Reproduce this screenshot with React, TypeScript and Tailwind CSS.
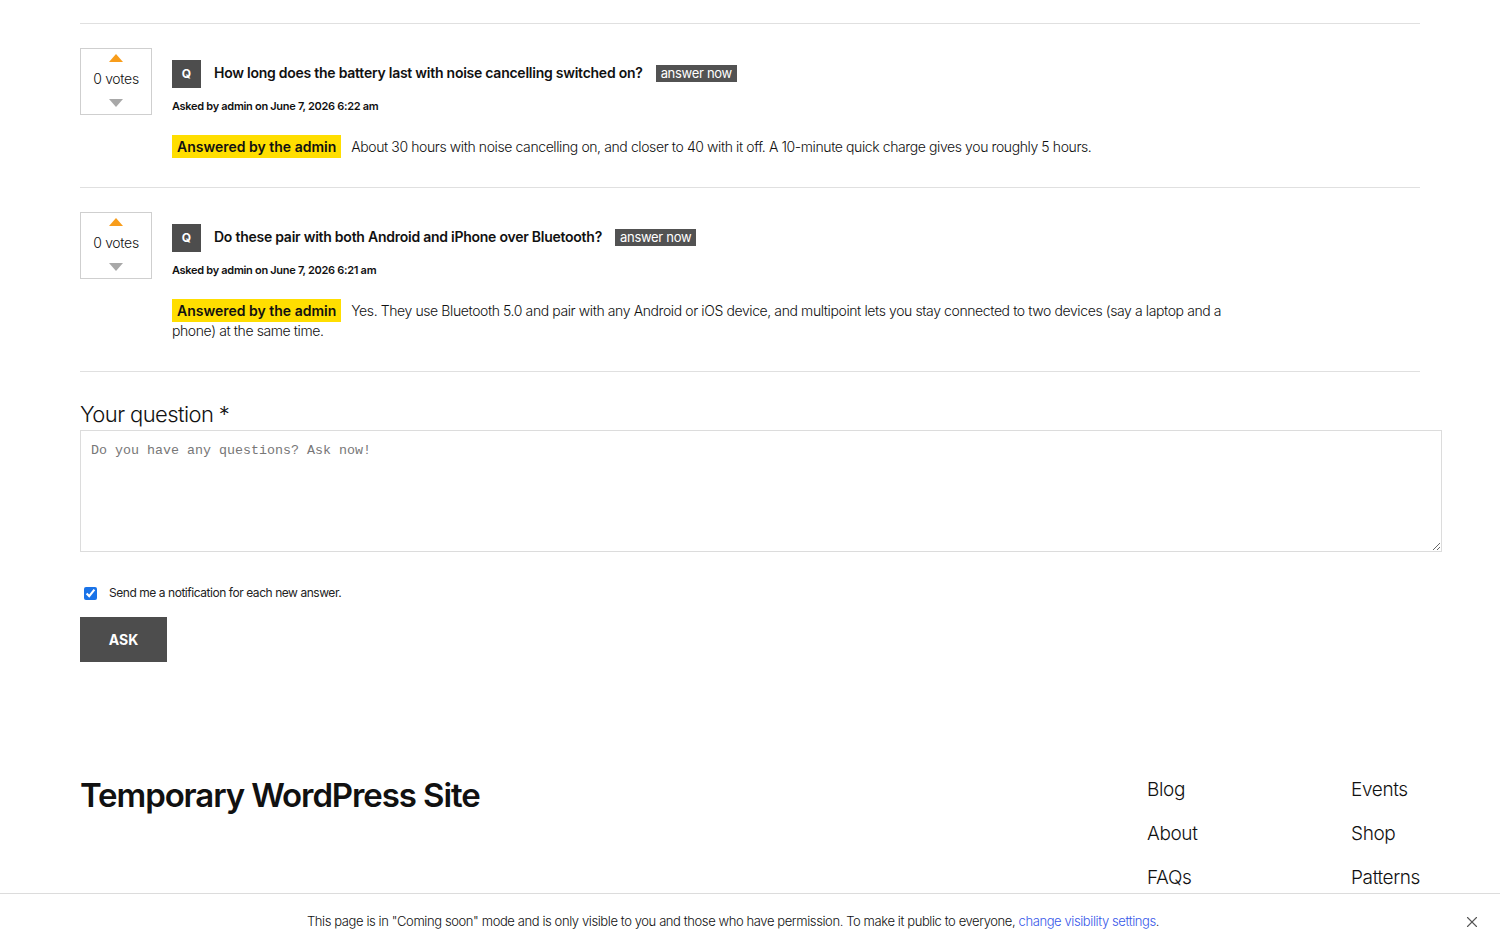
import { X } from 'lucide-react'

type Item = {
  question: string
  asked: string
  answer: string
}

const ITEMS: Item[] = [
  {
    question: 'How long does the battery last with noise cancelling switched on?',
    asked: 'Asked by admin on June 7, 2026 6:22 am',
    answer:
      'About 30 hours with noise cancelling on, and closer to 40 with it off. A 10-minute quick charge gives you roughly 5 hours.',
  },
  {
    question: 'Do these pair with both Android and iPhone over Bluetooth?',
    asked: 'Asked by admin on June 7, 2026 6:21 am',
    answer:
      'Yes. They use Bluetooth 5.0 and pair with any Android or iOS device, and multipoint lets you stay connected to two devices (say a laptop and a phone) at the same time.',
  },
]

const NAV = [
  ['Blog', 'Events'],
  ['About', 'Shop'],
  ['FAQs', 'Patterns'],
]

export default function App() {
  return (
    <div className="min-h-screen bg-white font-['Inter',sans-serif] text-[#111]">
      <div className="px-[80px] pt-[23px]">
        <div className="w-[1340px] border-t border-[#e0e0e0]">
          {ITEMS.map((item) => (
            <QuestionRow key={item.question} item={item} />
          ))}
        </div>

        <form className="mt-[28px]">
          <label className="block text-[22px] leading-[28px] font-light tracking-[-0.6px]">
            Your question *
          </label>
          <textarea
            className="mt-[2px] block h-[122px] w-[1362px] resize-y border border-[#dcdcdc] px-[10px] py-[10px] font-['Liberation_Mono',monospace] text-[13.33px] placeholder:text-[#777] focus:outline-none"
            placeholder="Do you have any questions? Ask now!"
          />
          <label className="mt-[33px] flex items-center gap-[12px] pl-[4px] text-[12px] leading-[16px] tracking-[-0.45px] text-[#222]">
            <input type="checkbox" defaultChecked className="h-[13px] w-[13px] accent-[#1a73e8]" />
            Send me a notification for each new answer.
          </label>
          <button
            type="button"
            className="mt-[16px] h-[45px] w-[87px] bg-[#4d4d4d] text-[14px] font-bold text-white"
          >
            ASK
          </button>
        </form>

        <footer className="mt-[115px] flex justify-between">
          <h2 className="-mt-[1px] text-[33px] leading-[38px] font-semibold tracking-[-1.1px] text-[#111]">
            Temporary WordPress Site
          </h2>
          <nav className="grid grid-cols-[204px_auto] gap-y-[18px] text-[19px] leading-[26px] font-light tracking-[-0.4px]">
            {NAV.flat().map((n) => (
              <a key={n} className="text-[#111]">
                {n}
              </a>
            ))}
          </nav>
        </footer>
      </div>

      <div className="fixed inset-x-0 bottom-0 flex h-[57px] items-center justify-center border-t border-[#dcdcdc] bg-white pr-[34px] text-[13px] tracking-[-0.4px] text-[#111]">
        <p className="font-light">
          This page is in "Coming soon" mode and is only visible to you and those who have permission. To make it public
          to everyone, <a className="text-[#3858e9]">change visibility settings</a>.
        </p>
        <button className="absolute right-[19px] text-[#555]">
          <X size={18} strokeWidth={1.5} />
        </button>
      </div>
    </div>
  )
}

function QuestionRow({ item }: { item: Item }) {
  return (
    <div className="flex gap-[20px] border-b border-[#e0e0e0] pt-[24px] pb-[30px]">
      <div className="flex h-[67px] w-[72px] shrink-0 flex-col items-center border border-[#cfcfcf] pt-[5px]">
        <span className="h-0 w-0 border-x-[7px] border-b-[8px] border-x-transparent border-b-[#f89d1b]" />
        <span className="mt-[8px] text-[14px] leading-[17px] font-light tracking-[-0.3px]">0 votes</span>
        <span className="mt-[12px] h-0 w-0 border-x-[7px] border-t-[8px] border-x-transparent border-t-[#a8a8a8]" />
      </div>
      <div className="pt-[12px]">
        <div className="flex items-center">
          <span className="flex h-[28px] w-[29px] items-center justify-center bg-[#4d4d4d] text-[12px] font-bold text-white">
            Q
          </span>
          <span className="ml-[13px] -mt-[3px] text-[14px] font-semibold tracking-[-0.25px]">{item.question}</span>
          <span className="ml-[13px] -mt-[2px] bg-[#525252] px-[5px] text-[13px] leading-[17px] tracking-[-0.3px] text-white">
            answer now
          </span>
        </div>
        <p className="mt-[11px] text-[11px] leading-[15px] font-semibold tracking-[-0.3px]">{item.asked}</p>
        <p className="mt-[23px] max-w-[1060px] text-[14px] leading-[20px] font-light tracking-[-0.4px]">
          <span className="mr-[10px] bg-[#ffde00] px-[5px] py-[3px] font-semibold tracking-[0px]">
            Answered by the admin
          </span>
          {item.answer}
        </p>
      </div>
    </div>
  )
}
